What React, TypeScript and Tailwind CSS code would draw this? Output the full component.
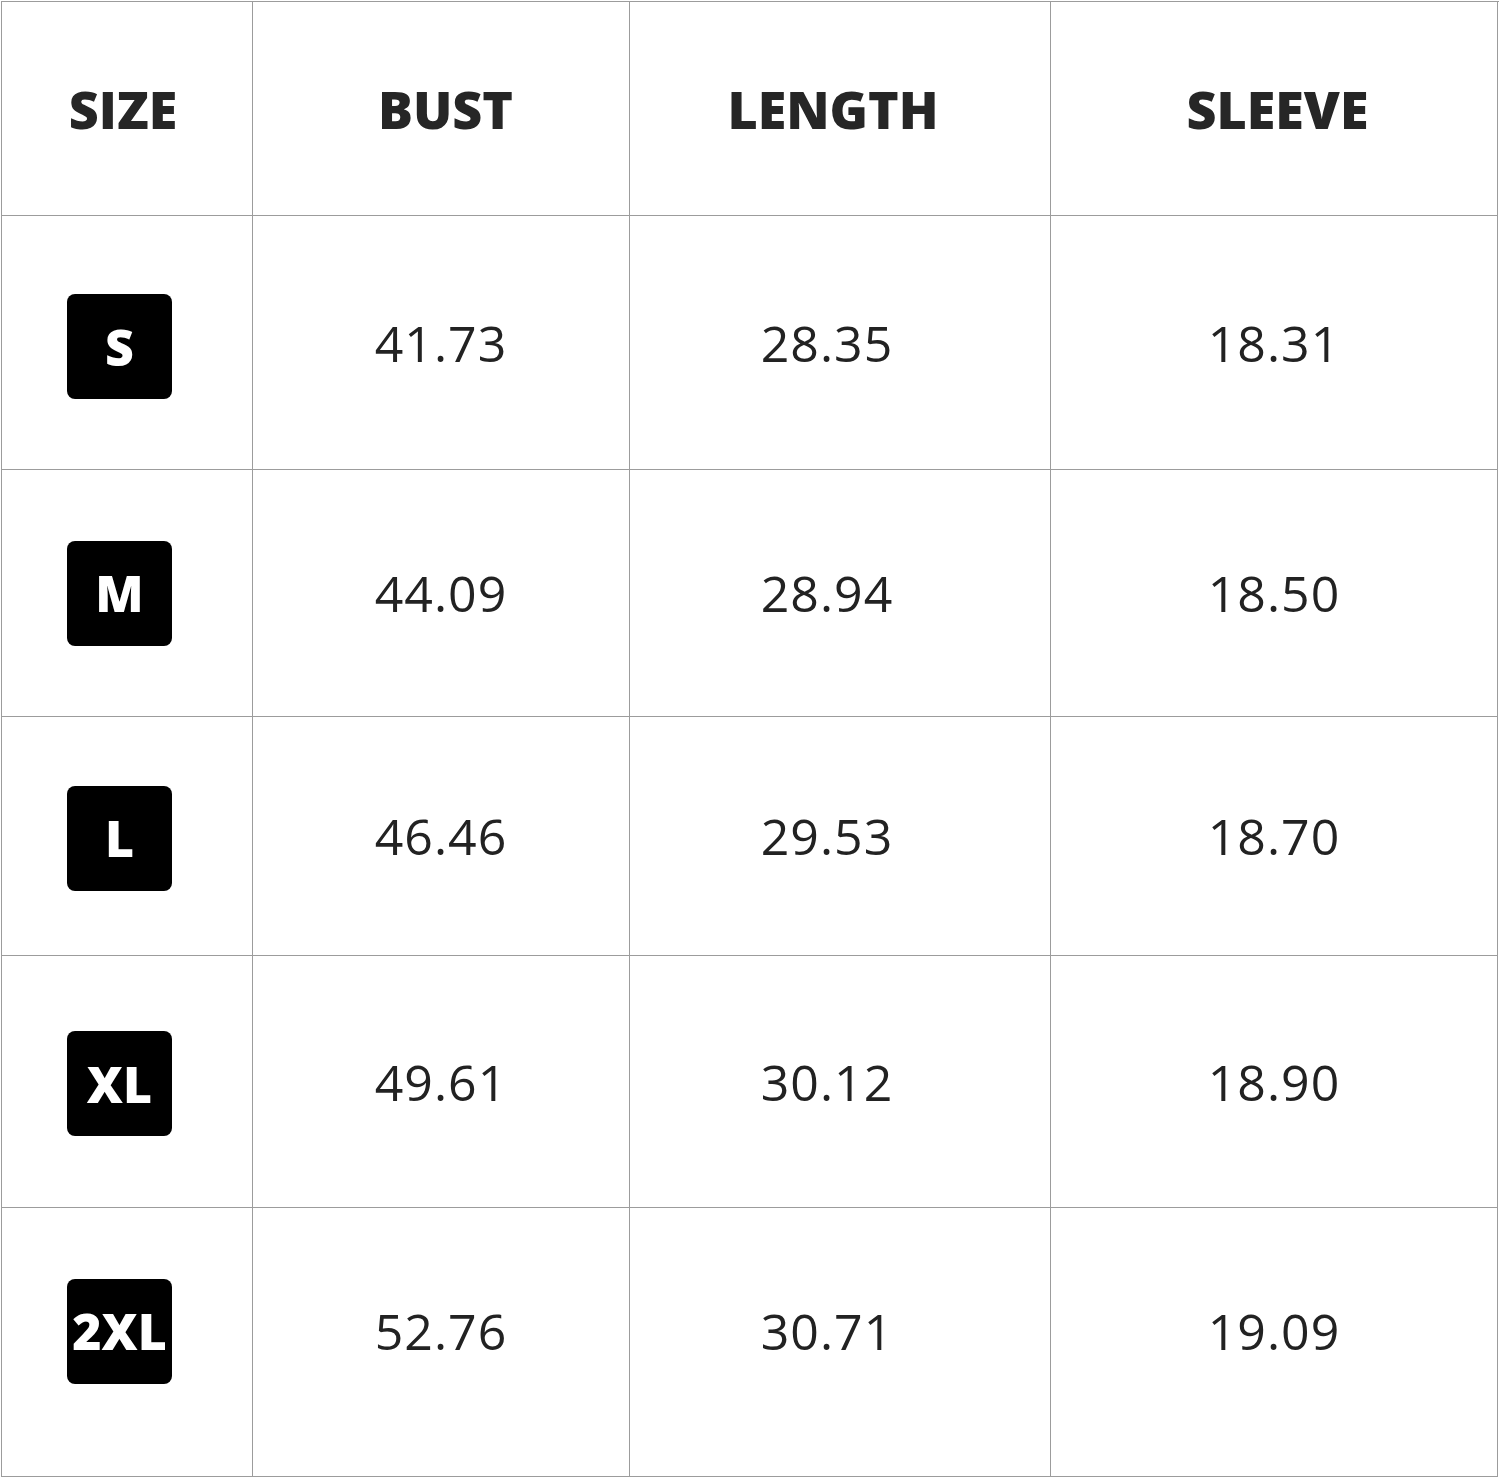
const rows = [
  { size: "S", bust: "41.73", length: "28.35", sleeve: "18.31", h: "h-[254px]", pad: "pt-[8px]" },
  { size: "M", bust: "44.09", length: "28.94", sleeve: "18.50", h: "h-[247px]", pad: "pt-[0px]" },
  { size: "L", bust: "46.46", length: "29.53", sleeve: "18.70", h: "h-[239px]", pad: "pt-[4px]" },
  { size: "XL", bust: "49.61", length: "30.12", sleeve: "18.90", h: "h-[252px]", pad: "pt-[4px]" },
  { size: "2XL", bust: "52.76", length: "30.71", sleeve: "19.09", h: "h-[269px]", pad: "pb-[22px]" },
];

const cell = "flex items-center justify-center border-r border-b border-[#9c9c9c]";
const head = "text-[52px] font-extrabold tracking-[0px] text-[#262626] leading-none";
const value = "text-[50px] font-normal tracking-[1px] text-[#222222] leading-none";

export default function App() {
  return (
    <div className="w-[1500px] h-[1479px] bg-white p-[1px]" style={{ fontFamily: '"Open Sans", "Noto Sans", sans-serif' }}>
      <div className="grid grid-cols-[251px_377px_421px_447px] border-l border-t border-[#9c9c9c]">
        {/* header row */}
        <div className={`${cell} h-[214px] pr-[8px]`}>
          <span className={head}>SIZE</span>
        </div>
        <div className={`${cell} h-[214px] pl-[9px]`}>
          <span className={head}>BUST</span>
        </div>
        <div className={`${cell} h-[214px] pr-[14px]`}>
          <span className={head}>LENGTH</span>
        </div>
        <div className={`${cell} h-[214px] pl-[7px]`}>
          <span className={head}>SLEEVE</span>
        </div>

        {rows.map((r, i) => (
          <div key={r.size} className="contents">
            <div className={`${cell} ${r.h} ${r.pad} justify-start pl-[65px]`}>
              <div className="w-[105px] h-[105px] rounded-[8px] bg-black flex items-center justify-center">
                <span className="text-[50px] font-extrabold text-white leading-none">{r.size}</span>
              </div>
            </div>
            <div className={`${cell} ${r.h} ${i === 4 ? "pb-[22px]" : ""}`}>
              <span className={value}>{r.bust}</span>
            </div>
            <div className={`${cell} ${r.h} pr-[26px] ${i === 4 ? "pb-[22px]" : ""}`}>
              <span className={value}>{r.length}</span>
            </div>
            <div className={`${cell} ${r.h} ${i === 4 ? "pb-[22px]" : ""}`}>
              <span className={value}>{r.sleeve}</span>
            </div>
          </div>
        ))}
      </div>
    </div>
  );
}
